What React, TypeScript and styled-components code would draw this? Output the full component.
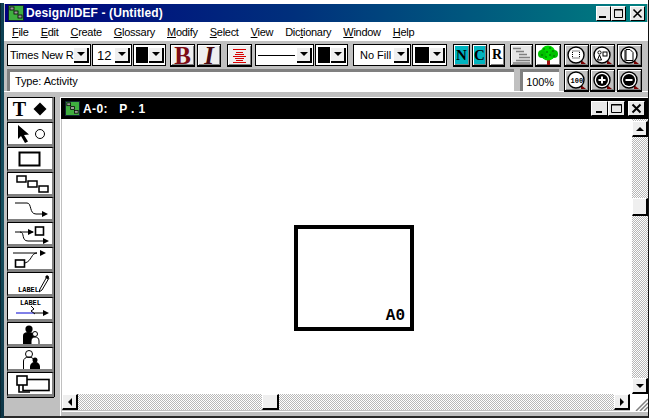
import React from "react";
import styled, { createGlobalStyle, css } from "styled-components";

const Global = createGlobalStyle`
  html, body { margin: 0; padding: 0; background: #fff; }
  #root { width: 651px; height: 418px; overflow: hidden; }
`;

const dither = css`
  background: repeating-conic-gradient(#fff 0 25%, #b8b8b8 0 50%) 0 0 / 2px 2px;
`;

const Screen = styled.div`
  width: 651px;
  height: 418px;
  display: flex;
  background: #fff;
  font-family: "Liberation Sans", Arial, sans-serif;
  overflow: hidden;
`;
const Desktop = styled.div`
  width: 4px;
  margin-top: 3px;
  background: linear-gradient(180deg, #0d3f52, #16505f 50%, #0d3546);
  border-left: 1px solid #0a2530;
  box-sizing: border-box;
`;
const Frame = styled.div`
  width: 645px;
  height: 418px;
  box-sizing: border-box;
  padding-top: 4px;
  display: flex;
  flex-direction: column;
  border-right: 1px solid #111;
  border-bottom: 2px solid #2a2a2a;
  background: #c0c0c0;
  background-clip: padding-box;
  position: relative;
`;
const TopWhite = styled.div`
  position: absolute;
  top: 0;
  left: 0;
  right: 0;
  height: 4px;
  background: #fff;
`;
const TitleBar = styled.div`
  height: 18px;
  margin: 0 1px 0 1px;
  display: flex;
  align-items: center;
  background: linear-gradient(90deg, #000080 0%, #00307c 45%, #008080 100%);
  color: #fff;
  font-weight: 700;
  font-size: 12px;
  padding-left: 3px;
  flex: none;
`;
const TitleText = styled.span`
  margin-left: 2px;
  letter-spacing: 0.12px;
  white-space: pre;
`;
const WinButtons = styled.div<{ $mr: number }>`
  margin-left: auto;
  display: flex;
  margin-right: ${(p) => p.$mr}px;
`;
const WinButton = styled.div<{ $ml?: number; $w: number }>`
  width: ${(p) => p.$w}px;
  height: 15px;
  margin-left: ${(p) => p.$ml ?? 0}px;
  background: #e8e8e8;
  box-sizing: border-box;
  border: 1px solid #fff;
  border-right-color: #000;
  border-bottom-color: #000;
  display: flex;
  align-items: center;
  justify-content: center;
`;
const MenuBar = styled.div`
  height: 19px;
  flex: none;
  display: flex;
  align-items: center;
  gap: 12px;
  padding-left: 8px;
  background: #fff;
  font-size: 11px;
  letter-spacing: -0.28px;
  color: #000;
`;
const MenuItem = styled.span`
  white-space: pre;
  u { text-underline-offset: 1px; }
`;
const Tools = styled.div`
  height: 51px;
  flex: none;
  background: #c0c0c0;
  display: flex;
  flex-direction: column;
  padding: 3px 0 0 3px;
  box-sizing: border-box;
  gap: 2px;
  border-bottom: 1px solid #fff;
`;
const Row = styled.div`
  display: flex;
  height: 23px;
  flex: none;
`;
const Combo = styled.div<{ $w: number; $ml?: number }>`
  width: ${(p) => p.$w}px;
  height: 22px;
  margin-left: ${(p) => p.$ml ?? 1}px;
  box-sizing: border-box;
  background: #fff;
  border: 1px solid #000;
  display: flex;
  align-items: center;
  font-size: 11px;
  padding-left: 2px;
  white-space: pre;
`;
const ComboLabel = styled.span<{ $pl?: number; $size?: number; $ls?: number }>`
  flex: 1;
  padding-left: ${(p) => p.$pl ?? 0}px;
  min-width: 0;
  font-size: ${(p) => p.$size ?? 11}px;
  letter-spacing: ${(p) => p.$ls ?? 0}px;
`;
const Swatch = styled.div`
  flex: 1;
  height: 16px;
  background: #000;
`;
const LineSample = styled.div`
  flex: 1;
  height: 1px;
  background: #000;
  margin-right: 1px;
`;
const DropBtn = styled.div`
  width: 15px;
  height: 15px;
  flex: none;
  margin: 0 1px 0 1px;
  background: #efefef;
  border-right: 2px solid #000;
  border-bottom: 2px solid #000;
  box-sizing: border-box;
  display: flex;
  align-items: center;
  justify-content: center;
  &::after {
    content: "";
    border-left: 4px solid transparent;
    border-right: 4px solid transparent;
    border-top: 4px solid #000;
  }
`;
const IconBtn = styled.div<{ $w: number; $ml?: number; $bg?: string; $h?: number }>`
  width: ${(p) => p.$w}px;
  height: ${(p) => p.$h ?? 23}px;
  margin-left: ${(p) => p.$ml ?? 0}px;
  flex: none;
  box-sizing: border-box;
  border: 1px solid #000;
  border-bottom-width: 2px;
  background: ${(p) => p.$bg ?? "#c0c0c0"};
  box-shadow: inset 1px 1px 0 #fff, inset -1px -1px 0 #808080;
  display: flex;
  align-items: center;
  justify-content: center;
  font-family: "Liberation Serif", serif;
  font-weight: 700;
`;
const Glyph = styled.span<{ $size: number; $color?: string; $italic?: boolean }>`
  font-size: ${(p) => p.$size}px;
  line-height: 1;
  color: ${(p) => p.$color ?? "#000"};
  font-style: ${(p) => (p.$italic ? "italic" : "normal")};
`;
const InsetField = styled.div<{ $w: number; $ml?: number }>`
  width: ${(p) => p.$w}px;
  height: 22px;
  margin-left: ${(p) => p.$ml ?? 0}px;
  box-sizing: border-box;
  flex: none;
  background: #fff;
  border-top: 3px solid #808080;
  border-left: 3px solid #808080;
  display: flex;
  align-items: center;
  font-size: 11px;
  letter-spacing: -0.12px;
`;
const Status = styled.span`
  padding-left: 5px;
  margin-top: -2px;
`;
const Zoomed = styled.span`
  margin-left: auto;
  padding-right: 5px;
`;
const Rule = styled.div`
  height: 4px;
  flex: none;
  background: #c0c0c0;
`;
const Workspace = styled.div`
  flex: 1;
  min-height: 0;
  display: flex;
  background: #c0c0c0;
`;
const Palette = styled.div`
  width: 55px;
  flex: none;
  padding: 1px 0 0 3px;
  box-sizing: border-box;
  display: flex;
  flex-direction: column;
`;
const ToolButton = styled.div`
  width: 47px;
  height: 25px;
  flex: none;
  box-sizing: border-box;
  background: #fff;
  border: 1px solid #000;
  border-bottom: 3px solid #808080;
  border-right: 2px solid #808080;
  box-shadow: 0 1px 0 #000, 1px 0 0 #000;
  display: flex;
  align-items: center;
  justify-content: center;
`;
const TypeTool = styled(ToolButton)`
  gap: 7px;
  font-family: "Liberation Serif", serif;
  font-weight: 700;
`;
const Doc = styled.div`
  width: 588px;
  height: 319px;
  margin: 1px 0 0 1px;
  flex: none;
  box-sizing: border-box;
  background: #c0c0c0;
  border-top: 1px solid #fff;
  border-left: 1px solid #fff;
  padding-left: 1px;
  display: flex;
  flex-direction: column;
`;
const DocHeader = styled.div`
  height: 21px;
  flex: none;
  background: #000;
  margin-left: -1px;
  display: flex;
  align-items: center;
  color: #fff;
  font-weight: 700;
  font-size: 12px;
  letter-spacing: 0.4px;
  padding-left: 4px;
`;
const DocTitle = styled.span`
  margin-left: 3px;
  white-space: pre;
`;
const DocBody = styled.div`
  flex: 1;
  min-height: 0;
  display: flex;
`;
const Canvas = styled.div`
  flex: 1;
  background: #fff;
  position: relative;
`;
const Node = styled.div`
  position: absolute;
  left: 232px;
  top: 106px;
  width: 120px;
  height: 106px;
  box-sizing: border-box;
  border: 4px solid #000;
  background: #fff;
`;
const NodeLabel = styled.span`
  position: absolute;
  right: 5px;
  bottom: 3px;
  font-family: "Liberation Mono", monospace;
  font-weight: 700;
  font-size: 16px;
  line-height: 1;
`;
const VScroll = styled.div`
  width: 16px;
  flex: none;
  display: flex;
  flex-direction: column;
  padding-top: 2px;
  box-sizing: border-box;
  ${dither};
`;
const ScrollBtn = styled.div`
  width: 16px;
  height: 16px;
  flex: none;
  box-sizing: border-box;
  background: #efefef;
  border-top: 1px solid #fff;
  border-left: 1px solid #fff;
  border-right: 2px solid #000;
  border-bottom: 2px solid #000;
  display: flex;
  align-items: center;
  justify-content: center;
`;
const VThumb = styled(ScrollBtn)`
  margin-top: 61px;
  height: 18px;
  margin-bottom: auto;
`;
const HRow = styled.div`
  height: 17px;
  flex: none;
  display: flex;
`;
const HScroll = styled.div`
  flex: 1;
  display: flex;
  height: 16px;
  ${dither};
`;
const HThumb = styled(ScrollBtn)`
  margin-left: 184px;
  width: 17px;
  margin-right: auto;
`;
const Corner = styled.div`
  width: 18px;
  height: 17px;
  flex: none;
  background: #fff;
  display: flex;
  align-items: flex-end;
  justify-content: flex-end;
`;
const Arrow = styled.div<{ $dir: "up" | "down" | "left" | "right" }>`
  width: 0;
  height: 0;
  ${(p) =>
    p.$dir === "up"
      ? "border-left:4px solid transparent;border-right:4px solid transparent;border-bottom:4px solid #000;"
      : p.$dir === "down"
      ? "border-left:4px solid transparent;border-right:4px solid transparent;border-top:4px solid #000;"
      : p.$dir === "left"
      ? "border-top:4px solid transparent;border-bottom:4px solid transparent;border-right:4px solid #000;"
      : "border-top:4px solid transparent;border-bottom:4px solid transparent;border-left:4px solid #000;"}
`;
const BottomBand = styled.div`
  height: 4px;
  flex: none;
  background: #c0c0c0;
  border-top: 1px solid #fff;
`;
const LabelText = styled.text`
  font-family: "Liberation Mono", monospace;
  font-weight: 700;
  font-size: 7px;
`;

const AppIcon = ({ size = 16 }: { size?: number }) => (
  <svg width={size} height={size} viewBox="0 0 16 16">
    <rect x="0.5" y="0.5" width="15" height="15" fill="#3fae3f" stroke="#123" />
    <rect x="2" y="2" width="4" height="3" fill="#9a9a9a" stroke="#000" strokeWidth="0.8" />
    <rect x="6" y="6" width="4" height="3" fill="#9a9a9a" stroke="#000" strokeWidth="0.8" />
    <rect x="10" y="10" width="4" height="3" fill="#9a9a9a" stroke="#000" strokeWidth="0.8" />
  </svg>
);

const MagBtn = ({ ml, h, children }: { ml?: number; h?: number; children: React.ReactNode }) => (
  <IconBtn $w={25} $ml={ml} $h={h}>
    <svg width="23" height="21" viewBox="0 0 23 21">
      <path d="M16 15 L21 19 L16 19 Z" fill="#7a0000" />
      <circle cx="11" cy="10" r="8" fill="#fff" stroke="#000" strokeWidth="1.4" />
      {children}
    </svg>
  </IconBtn>
);

const menus: [string, string, string][] = [
  ["", "F", "ile"],
  ["", "E", "dit"],
  ["", "C", "reate"],
  ["", "G", "lossary"],
  ["", "M", "odify"],
  ["", "S", "elect"],
  ["", "V", "iew"],
  ["Dic", "t", "ionary"],
  ["", "W", "indow"],
  ["", "H", "elp"],
];

export default function App() {
  return (
    <Screen>
      <Global />
      <Desktop />
      <Frame>
        <TopWhite />
        <TitleBar>
          <AppIcon />
          <TitleText>Design/IDEF - (Untitled)</TitleText>
          <WinButtons $mr={2}>
            <WinButton $w={15}>
              <svg width="11" height="11" viewBox="0 0 11 11"><rect x="1" y="8" width="7" height="2" /></svg>
            </WinButton>
            <WinButton $w={15}>
              <svg width="11" height="11" viewBox="0 0 11 11"><path d="M1.5 1.5h8v8h-8z M1 2h9" fill="none" stroke="#000" /></svg>
            </WinButton>
            <WinButton $w={15} $ml={4}>
              <svg width="11" height="11" viewBox="0 0 11 11"><path d="M1.5 1.5l8 8M9.5 1.5l-8 8" stroke="#000" strokeWidth="1.6" /></svg>
            </WinButton>
          </WinButtons>
        </TitleBar>
        <MenuBar>
          {menus.map(([a, b, c]) => (
            <MenuItem key={a + b + c}>
              {a}
              <u>{b}</u>
              {c}
            </MenuItem>
          ))}
        </MenuBar>
        <Tools>
          <Row>
            <Combo $w={84} $ml={0}>
              <ComboLabel $ls={-0.2}>Times New R</ComboLabel>
              <DropBtn />
            </Combo>
            <Combo $w={40}>
              <ComboLabel $pl={2} $size={13}>12</ComboLabel>
              <DropBtn />
            </Combo>
            <Combo $w={33}>
              <Swatch />
              <DropBtn />
            </Combo>
            <IconBtn $w={25} $ml={4} $bg="#efefef">
              <Glyph $size={25} $color="#7d0c16">B</Glyph>
            </IconBtn>
            <IconBtn $w={24} $ml={2} $bg="#efefef">
              <Glyph $size={25} $color="#4a0a10" $italic>I</Glyph>
            </IconBtn>
            <IconBtn $w={25} $ml={6} $bg="#efefef">
              <svg width="17" height="17" viewBox="0 0 17 17">
                <path d="M2 2.5h13M5 5.5h7M4 7.5h9M2 9.5h13M4 11.5h9M5 13.5h7M2 15.5h13" stroke="#d80000" strokeWidth="1" />
              </svg>
            </IconBtn>
            <Combo $w={59} $ml={3}>
              <LineSample />
              <DropBtn />
            </Combo>
            <Combo $w={33}>
              <Swatch />
              <DropBtn />
            </Combo>
            <Combo $w={58} $ml={5}>
              <ComboLabel $pl={4}>No Fill</ComboLabel>
              <DropBtn />
            </Combo>
            <Combo $w={35}>
              <Swatch />
              <DropBtn />
            </Combo>
            <IconBtn $w={17} $ml={6} $bg="#00b4c0">
              <Glyph $size={15}>N</Glyph>
            </IconBtn>
            <IconBtn $w={15} $ml={2} $bg="#00b4c0">
              <Glyph $size={15}>C</Glyph>
            </IconBtn>
            <IconBtn $w={16} $ml={2} $bg="#fff">
              <Glyph $size={14}>R</Glyph>
            </IconBtn>
            <IconBtn $w={23} $ml={5} $bg="#e6e6e6">
              <svg width="21" height="19" viewBox="0 0 21 19">
                <path d="M2 2.5h8M5 5.5h8M8 8.5h8M8 11.5h11M5 14.5h14M2 17h17" stroke="#808080" strokeWidth="1.6" />
              </svg>
            </IconBtn>
            <IconBtn $w={26} $ml={2} $bg="#fff">
              <svg width="22" height="20" viewBox="0 0 22 20">
                <rect x="10" y="13" width="3" height="7" fill="#a01010" />
                <circle cx="11" cy="8" r="7.5" fill="#00d800" />
                <circle cx="5" cy="9" r="4" fill="#00c000" />
                <circle cx="17" cy="9" r="4" fill="#00c000" />
                <path d="M6 4h2M12 3h2M9 7h2M15 6h2M4 10h2M12 10h2M8 12h2M16 11h2" stroke="#056005" />
              </svg>
            </IconBtn>
            <MagBtn ml={3}>
              <rect x="7.5" y="6" width="7" height="7" fill="none" stroke="#000" strokeDasharray="1 1" />
            </MagBtn>
            <MagBtn ml={1}>
              <rect x="12" y="7" width="4" height="4" fill="none" stroke="#000" />
              <circle cx="8.5" cy="7.5" r="1.6" fill="none" stroke="#000" />
              <path d="M6.5 15l2-5 2 5z" fill="none" stroke="#000" />
            </MagBtn>
            <MagBtn ml={2}>
              <path d="M8 4.5h4l3 3v8H8z M7 5v11" fill="none" stroke="#000" />
            </MagBtn>
          </Row>
          <Row>
            <InsetField $w={507} $ml={0}>
              <Status>Type: Activity</Status>
            </InsetField>
            <InsetField $w={39} $ml={6}>
              <Zoomed>100%</Zoomed>
            </InsetField>
            <MagBtn ml={5}>
              <LabelText x="5.5" y="12.5">100</LabelText>
            </MagBtn>
            <MagBtn ml={1}>
              <circle cx="11" cy="10" r="6" fill="#000" />
              <path d="M7.5 10h7M11 6.5v7" stroke="#fff" strokeWidth="2" />
            </MagBtn>
            <MagBtn ml={2}>
              <circle cx="11" cy="10" r="6" fill="#000" />
              <path d="M7.5 10h7" stroke="#fff" strokeWidth="2" />
            </MagBtn>
          </Row>
        </Tools>
        <Rule />
        <Workspace>
          <Palette>
            <TypeTool>
              <Glyph $size={20}>T</Glyph>
              <svg width="14" height="14" viewBox="0 0 14 14">
                <path d="M7 0.5l6.5 6.5L7 13.500 0.500 7z" />
              </svg>
            </TypeTool>
            <ToolButton>
              <svg width="42" height="20" viewBox="0 0 42 20">
                <path d="M9 1v14l3-3 4 7 3-1.500-4-6.500 5-.5z" />
                <circle cx="31" cy="10" r="4.500" fill="none" stroke="#000" />
              </svg>
            </ToolButton>
            <ToolButton>
              <svg width="42" height="19" viewBox="0 0 42 19">
                <rect x="10.500" y="3.500" width="20" height="13" fill="none" stroke="#000" strokeWidth="2" />
              </svg>
            </ToolButton>
            <ToolButton>
              <svg width="42" height="20" viewBox="0 0 42 20">
                <rect x="8" y="2" width="9" height="6" fill="none" stroke="#000" strokeWidth="1.500" />
                <rect x="19" y="7" width="9" height="6" fill="none" stroke="#000" strokeWidth="1.500" />
                <rect x="30" y="12" width="9" height="6" fill="none" stroke="#000" strokeWidth="1.500" />
              </svg>
            </ToolButton>
            <ToolButton>
              <svg width="42" height="20" viewBox="0 0 42 20">
                <path d="M6 4h12c5 0 2 11 9 11h7" fill="none" stroke="#000" />
                <path d="M33 12l6 3-6 3z" />
              </svg>
            </ToolButton>
            <ToolButton>
              <svg width="42" height="20" viewBox="0 0 42 20">
                <path d="M6 8h18M11 8c5 0 1 9 8 9h15" fill="none" stroke="#000" />
                <path d="M19 5l6 3-6 3zM34 14l6 3-6 3z" />
                <rect x="26.500" y="3" width="8" height="8" fill="none" stroke="#000" strokeWidth="1.600" />
              </svg>
            </ToolButton>
            <ToolButton>
              <svg width="42" height="20" viewBox="0 0 42 20">
                <path d="M4 4h24c-6 0-5 8-12 10" fill="none" stroke="#000" />
                <path d="M31 1l6 3-6 3z" />
                <rect x="6.500" y="11" width="9" height="7" fill="none" stroke="#000" strokeWidth="1.600" />
              </svg>
            </ToolButton>
            <ToolButton>
              <svg width="42" height="20" viewBox="0 0 42 20">
                <LabelText x="9" y="18">LABEL</LabelText>
                <path d="M31 15l-1 3 3-2 7-12-2-1.500z" fill="#fff" stroke="#000" />
                <path d="M36 3l2-2 2 1.500-1.500 3z" />
              </svg>
            </ToolButton>
            <ToolButton>
              <svg width="42" height="21" viewBox="0 0 42 21">
                <LabelText x="11" y="7">LABEL</LabelText>
                <path d="M7 15h18" stroke="#0000d0" />
                <path d="M25 15h9" stroke="#000" />
                <path d="M22 8l3 3-3 2 4 3" fill="none" stroke="#000" />
                <path d="M34 12l6 3-6 3z" />
              </svg>
            </ToolButton>
            <ToolButton>
              <svg width="42" height="20" viewBox="0 0 42 20">
                <circle cx="20" cy="5" r="3.600" />
                <path d="M14 20v-8c0-3 2-4 6-4 3 0 5 1 6 4v8z" />
                <circle cx="26" cy="10" r="2.500" fill="#fff" stroke="#000" />
                <path d="M22 20v-3c0-3 2-4 4-4s4 1 4 4v3" fill="#fff" stroke="#000" />
              </svg>
            </ToolButton>
            <ToolButton>
              <svg width="42" height="20" viewBox="0 0 42 20">
                <circle cx="20" cy="5" r="3.500" fill="none" stroke="#000" />
                <path d="M14.500 20v-8c0-2 2-4 5.500-4 3 0 5 2 5.500 4" fill="none" stroke="#000" />
                <circle cx="26" cy="11" r="2.500" />
                <path d="M21 20v-2c0-3 2-5 5-5s5 2 5 5v2z" />
              </svg>
            </ToolButton>
            <ToolButton>
              <svg width="42" height="21" viewBox="0 0 42 21">
                <rect x="14" y="6.500" width="26" height="11" fill="none" stroke="#000" strokeWidth="1.600" />
                <rect x="8" y="3" width="10" height="9" fill="#fff" stroke="#000" strokeWidth="1.600" />
                <path d="M10 12v7h11" fill="none" stroke="#000" strokeWidth="1.600" />
              </svg>
            </ToolButton>
          </Palette>
          <Doc>
            <DocHeader>
              <AppIcon size={15} />
              <DocTitle>A-0:   P . 1</DocTitle>
              <WinButtons $mr={3}>
                <WinButton $w={17}>
                  <svg width="11" height="11" viewBox="0 0 11 11"><rect x="2" y="8" width="6" height="2" /></svg>
                </WinButton>
                <WinButton $w={17}>
                  <svg width="11" height="11" viewBox="0 0 11 11"><path d="M.5 1.500h10v8H.5z M0 2h11" fill="none" stroke="#000" /></svg>
                </WinButton>
                <WinButton $w={17} $ml={3}>
                  <svg width="11" height="11" viewBox="0 0 11 11"><path d="M1.500 1.500l8 8M9.500 1.500l-8 8" stroke="#000" strokeWidth="2" /></svg>
                </WinButton>
              </WinButtons>
            </DocHeader>
            <DocBody>
              <Canvas>
                <Node>
                  <NodeLabel>A0</NodeLabel>
                </Node>
              </Canvas>
              <VScroll>
                <ScrollBtn><Arrow $dir="up" /></ScrollBtn>
                <VThumb />
                <ScrollBtn><Arrow $dir="down" /></ScrollBtn>
              </VScroll>
            </DocBody>
            <HRow>
              <HScroll>
                <ScrollBtn><Arrow $dir="left" /></ScrollBtn>
                <HThumb />
                <ScrollBtn><Arrow $dir="right" /></ScrollBtn>
              </HScroll>
              <Corner>
                <svg width="13" height="13" viewBox="0 0 13 13">
                  <path d="M1 13L13 1M5 13L13 5M9 13L13 9" stroke="#808080" strokeWidth="1.500" />
                </svg>
              </Corner>
            </HRow>
            <BottomBand />
          </Doc>
        </Workspace>
      </Frame>
    </Screen>
  );
}
